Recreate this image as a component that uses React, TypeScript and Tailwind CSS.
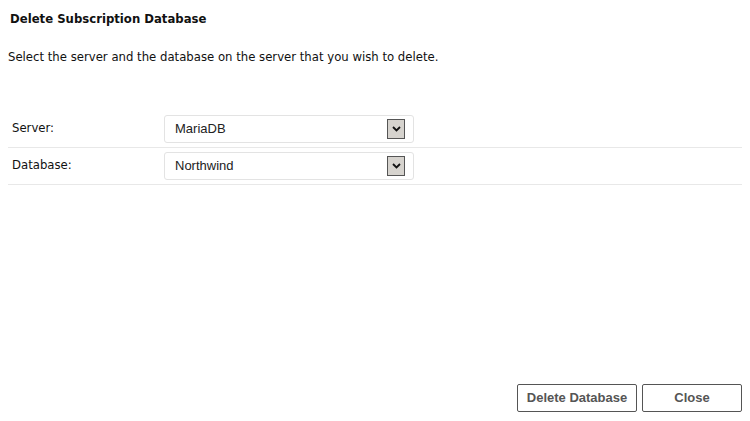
const ChevronBox = () => (
  <span className="flex h-[20px] w-[18px] items-center justify-center border border-[#555] bg-[#d6d3ce]">
    <svg width="9" height="6" viewBox="0 0 9 6">
      <path d="M1 1 L4.5 4.5 L8 1" fill="none" stroke="#111" strokeWidth="1.8" />
    </svg>
  </span>
);

const SelectBox = ({ value }: { value: string }) => (
  <div className="flex h-[28px] w-[250px] items-center justify-between rounded-[3px] border border-[#e3e3e3] bg-white pl-[10px] pr-[8px]">
    <span className="font-['Liberation_Sans',Arial,sans-serif] text-[13px] text-[#222]">{value}</span>
    <ChevronBox />
  </div>
);

const App = () => {
  const rows = [
    { label: "Server:", value: "MariaDB" },
    { label: "Database:", value: "Northwind" },
  ];

  return (
    <div className="flex h-[421px] w-[750px] flex-col bg-white px-2 font-['DejaVu_Sans',Verdana,sans-serif] text-[#111]">
      <h1 className="mt-[12px] pl-[2px] text-[11.7px] font-bold leading-[14px]">Delete Subscription Database</h1>
      <p className="mt-[24px] text-[11.7px] leading-[14px]">
        Select the server and the database on the server that you wish to delete.
      </p>

      <div className="mt-[47px] w-[734px]">
        {rows.map((row) => (
          <div key={row.label} className="flex items-center border-b border-[#e8e8e8] py-1">
            <span className="w-[156px] pl-1 text-[11.7px]">{row.label}</span>
            <SelectBox value={row.value} />
          </div>
        ))}
      </div>

      <div className="mt-auto mb-[9px] flex justify-end gap-[5px] font-['Liberation_Sans',Arial,sans-serif] text-[13px] font-bold text-[#555]">
        <button className="h-[28px] w-[120px] rounded-[2px] border border-[#555] bg-white">Delete Database</button>
        <button className="h-[28px] w-[100px] rounded-[2px] border border-[#555] bg-white">Close</button>
      </div>
    </div>
  );
};

export default App;
